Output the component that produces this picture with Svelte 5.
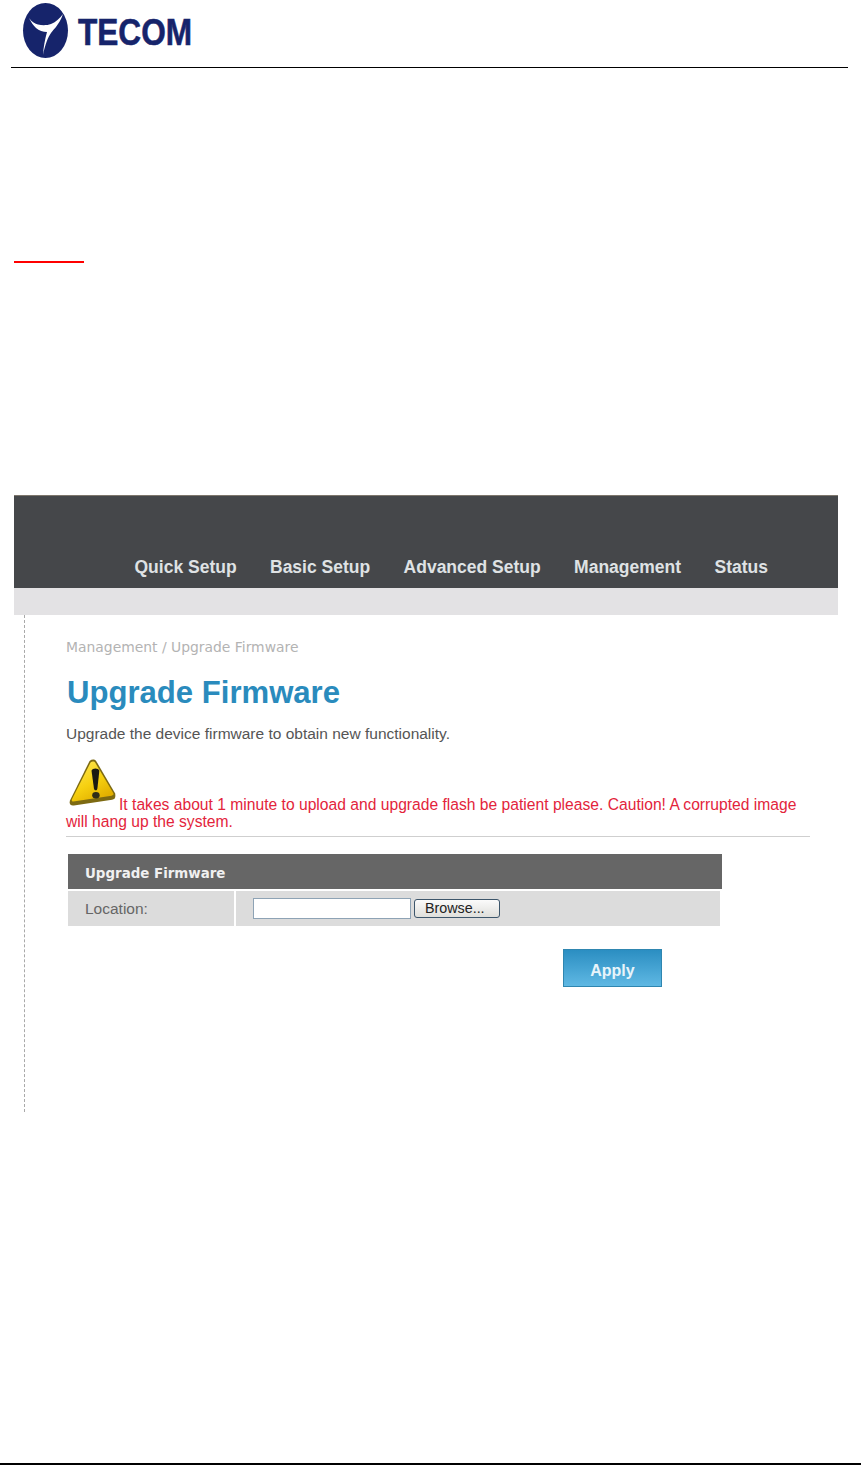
<script lang="ts">
  const menu = ['Quick Setup', 'Basic Setup', 'Advanced Setup', 'Management', 'Status'];
</script>

<div class="page">
  <header class="doc-head">
    <svg class="logo" viewBox="0 0 180 60" width="180" height="60" aria-label="TECOM logo">
      <ellipse cx="21.500" cy="30.500" rx="22.500" ry="27.500" fill="#16246b" />
      <path d="M5 18 C8 22 11 24 14 24.500 C18 25.500 23 25.500 27 24 C32 22 36 18 39 14 C37 20 34 24 32 27 C30 29 28.500 31 27 33 C24 37 21 45 19 55 C19.500 47 21 39 23 32 C19 32 15 30.500 12 28 C9 25 7 22 5 18 Z" fill="#fff" />
      <text x="54" y="45" class="logo-text" textLength="114" lengthAdjust="spacingAndGlyphs">TECOM</text>
    </svg>
  </header>

  <div class="red-rule"></div>

  <section class="shot">
    <nav class="topnav">
      {#each menu as item}
        <span>{item}</span>
      {/each}
    </nav>
    <div class="band"></div>

    <div class="content">
      <div class="crumb">Management / Upgrade Firmware</div>
      <h1>Upgrade Firmware</h1>
      <p class="desc">Upgrade the device firmware to obtain new functionality.</p>

      <p class="warn">
        <svg class="warn-icon" viewBox="0 0 48 48" width="47" height="47" aria-hidden="true">
          <defs>
            <linearGradient id="tri" x1="0" y1="0" x2="0.6" y2="1">
              <stop offset="0" stop-color="#ffe95a" />
              <stop offset="0.6" stop-color="#f6d010" />
              <stop offset="1" stop-color="#e2b000" />
            </linearGradient>
          </defs>
          <path d="M21 2 C23.500 0 26.500 0 28 2.500 L47 35 C48 38.500 47 41 44 41.500 L5 47.500 C1.500 48 0 46 1 42.500 Z" fill="#7d6a12" />
          <path d="M22 3.500 C24 2 26 2.500 27 4 L45 34.500 C46 36 45.500 37 43.500 37.500 L4.500 43.500 C3 43.500 2.500 42.500 3 41 Z" fill="url(#tri)" />
          <path d="M23 12 C24 9 30 9 31 12 L29 30 C28.500 32.500 26 32.500 25.500 30 Z" fill="#1b1a12" />
          <ellipse cx="27.500" cy="37" rx="3.800" ry="3.400" fill="#2f2c18" />
        </svg><span>It takes about 1 minute to upload and upgrade flash be patient please. Caution! A corrupted image will hang up the system.</span>
      </p>
      <hr />

      <div class="panel">
        <div class="panel-head">Upgrade Firmware</div>
        <div class="panel-row">
          <div class="label">Location:</div>
          <div class="value">
            <span class="file-input"></span>
            <span class="browse">Browse...</span>
          </div>
        </div>
      </div>

      <div class="actions">
        <span class="apply">Apply</span>
      </div>
    </div>
  </section>

  <footer class="doc-foot"></footer>
</div>

<style>
  :global(body) {
    margin: 0;
    background: #fff;
  }

  .page {
    height: 1465px;
    display: flex;
    flex-direction: column;
    overflow: hidden;
    font-family: 'Liberation Sans', Arial, sans-serif;
  }

  .doc-head {
    height: 67px;
    margin: 0 13px 0 11px;
    border-bottom: 1px solid #000;
    padding-left: 13px;
  }

  .logo {
    display: block;
    overflow: visible;
  }

  .logo-text {
    font-family: 'Liberation Sans', Arial, sans-serif;
    font-weight: 700;
    font-size: 37px;
    fill: #16246b;
    stroke: #16246b;
    stroke-width: 0.6px;
  }

  .red-rule {
    width: 70px;
    height: 2px;
    margin: 193px 0 0 14px;
    background: #f00;
  }

  .shot {
    width: 824px;
    height: 617px;
    margin: 232px 0 0 14px;
  }

  .topnav {
    height: 93px;
    box-sizing: border-box;
    border-top: 1px solid #7d766c;
    background: #45474a;
    display: flex;
    align-items: flex-end;
    gap: 33.400px;
    padding: 0 0 10px 120.500px;
    font-size: 17.500px;
    font-weight: 700;
    line-height: 22px;
    color: #dfe2e4;
  }

  .band {
    height: 27px;
    background: #e3e2e4;
  }

  .content {
    height: 497px;
    box-sizing: border-box;
    margin-left: 10px;
    padding: 24px 28px 0 41px;
    border-left: 1px dashed #a9a9a9;
  }

  .crumb {
    font-family: 'DejaVu Sans', Verdana, sans-serif;
    font-size: 13.900px;
    line-height: 16px;
    color: #b3b3b3;
    white-space: nowrap;
  }

  h1 {
    margin: 20px 0 0 1px;
    font-size: 31.100px;
    line-height: 36px;
    font-weight: 700;
    color: #2a8bbd;
  }

  .desc {
    margin: 14px 0 0;
    font-size: 15.500px;
    line-height: 18px;
    color: #555;
  }

  .warn {
    margin: 16px 0 0;
    font-size: 15.650px;
    line-height: 17px;
    color: #e3243b;
  }

  .warn-icon {
    display: inline-block;
    vertical-align: 4px;
    margin: 0 3px;
  }

  hr {
    height: 1px;
    border: 0;
    margin: 6px 0 0;
    background: #cfcfcf;
  }

  .panel {
    width: 654px;
    margin: 17px 0 0 2px;
  }

  .panel-head {
    height: 35px;
    box-sizing: border-box;
    padding: 11px 0 0 17px;
    background: #666;
    color: #f0f0f0;
    font-family: 'DejaVu Sans', Verdana, sans-serif;
    font-size: 13.400px;
    font-weight: 700;
    line-height: 18px;
  }

  .panel-row {
    display: grid;
    grid-template-columns: 166px 484px;
    gap: 2px;
    margin-top: 2px;
    height: 34px;
  }

  .label {
    background: #dcdcdc;
    padding-left: 17px;
    font-size: 15.500px;
    line-height: 35px;
    color: #666;
  }

  .value {
    background: #dcdcdc;
    display: flex;
    align-items: center;
    gap: 3px;
    padding-left: 17px;
  }

  .file-input {
    width: 158px;
    height: 21px;
    box-sizing: border-box;
    border: 1px solid #8ea3b5;
    background: #fff;
  }

  .browse {
    width: 86px;
    height: 19px;
    box-sizing: border-box;
    border: 1px solid #3d566b;
    border-radius: 3px;
    padding-left: 10px;
    background: linear-gradient(#fbfbfb, #dfdfdb);
    color: #222;
    font-size: 14.300px;
    line-height: 17px;
  }

  .actions {
    margin: 24px 0 0 497px;
  }

  .apply {
    display: block;
    width: 99px;
    height: 38px;
    box-sizing: border-box;
    border: 1px solid #2f86b0;
    background: linear-gradient(#2b8ec2, #5fb8e3);
    color: #e8f4fa;
    font-size: 16px;
    font-weight: 700;
    line-height: 42px;
    text-align: center;
  }

  .doc-foot {
    margin-top: auto;
    height: 2px;
    background: #000;
  }
</style>
